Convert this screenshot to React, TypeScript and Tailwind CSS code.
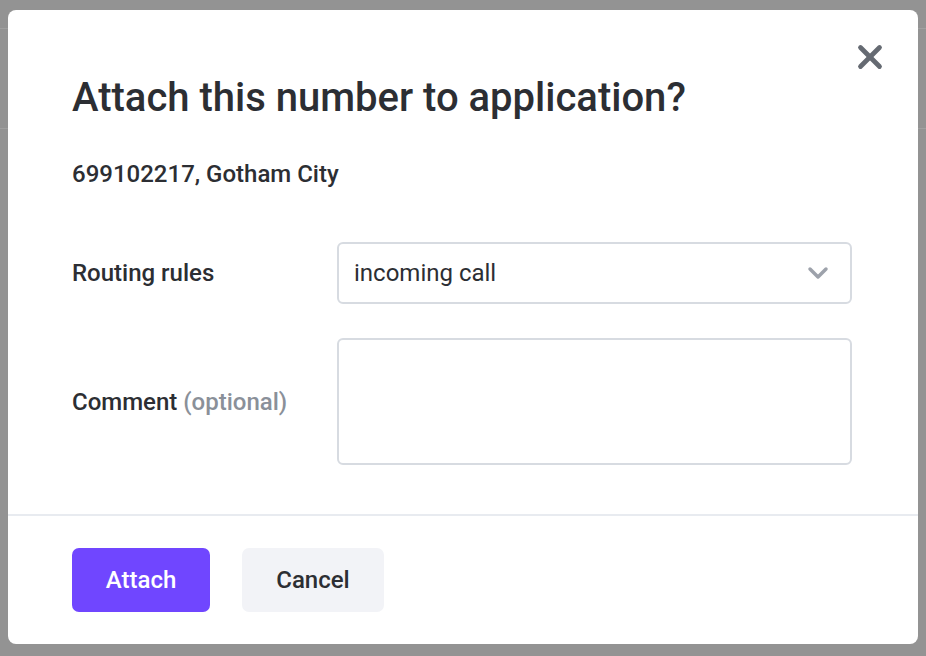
import { X, ChevronDown } from 'lucide-react'

function Backdrop() {
  return (
    <div className="min-h-[656px] bg-[#939393]">
      <div className="h-[28px]" />
      <div className="h-[100px] border-t border-[#a0a0a0]" />
      <div className="h-[528px] border-t border-[#a0a0a0]" />
    </div>
  )
}

function Field({ label, children }: { label: React.ReactNode; children: React.ReactNode }) {
  return (
    <div className="grid grid-cols-[265px_515px] items-center">
      <div className="text-[24px] font-medium text-[#2c2e33]">{label}</div>
      {children}
    </div>
  )
}

export default function App() {
  return (
    <div className="relative w-[926px] h-[656px] overflow-hidden font-['Roboto',sans-serif]">
      <Backdrop />

      <div className="absolute left-[8px] top-[10px] w-[910px] h-[634px] bg-white rounded-[8px] flex flex-col">
        <button className="absolute right-[29px] top-[28px] text-[#656a72]" aria-label="Close">
          <X size={38} strokeWidth={3} />
        </button>

        {/* Body */}
        <div className="px-[64px] pt-[64px] flex-1">
          <h2 className="text-[40px] leading-[48px] font-medium text-[#2c2e33]">
            Attach this number to application?
          </h2>
          <p className="mt-[38px] text-[24px] leading-[28px] font-medium text-[#2c2e33]">
            699102217, Gotham City
          </p>

          <div className="mt-[54px] flex flex-col gap-[34px]">
            <Field label="Routing rules">
              <div className="h-[62px] border-2 border-[#d7dbe1] rounded-[6px] flex items-center justify-between pl-[15px] pr-[16px]">
                <span className="text-[24px] text-[#2c2e33]">incoming call</span>
                <ChevronDown size={32} strokeWidth={2.6} className="text-[#9da2ab]" />
              </div>
            </Field>
            <Field
              label={
                <>
                  Comment <span className="text-[#8a9099]">(optional)</span>
                </>
              }
            >
              <textarea className="h-[127px] border-2 border-[#d7dbe1] rounded-[6px] resize-none outline-none" />
            </Field>
          </div>
        </div>

        {/* Footer */}
        <div className="border-t-2 border-[#e8ebf0] px-[64px] pt-[32px] pb-[32px] flex gap-[32px]">
          <button className="w-[138px] h-[64px] rounded-[7px] bg-[#7046ff] text-white text-[24px] font-medium">
            Attach
          </button>
          <button className="w-[142px] h-[64px] rounded-[7px] bg-[#f2f3f7] text-[#2c2e33] text-[24px] font-medium">
            Cancel
          </button>
        </div>
      </div>
    </div>
  )
}
